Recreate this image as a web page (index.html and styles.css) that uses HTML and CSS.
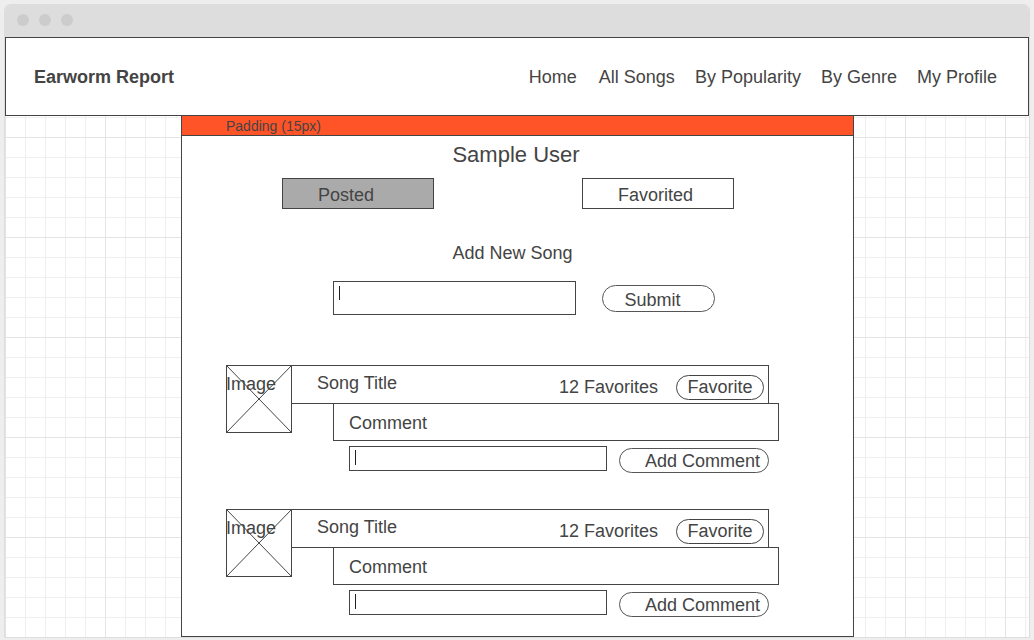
FILE: index.html
```html
<!DOCTYPE html>
<html>
<head>
<meta charset="utf-8">
<title>Earworm Report</title>
<link rel="stylesheet" href="styles.css">
</head>
<body>
<div class="window">
  <div class="titlebar">
    <span class="dot"></span><span class="dot"></span><span class="dot"></span>
  </div>
  <div class="canvas">
    <header class="header">
      <div class="brand">Earworm Report</div>
      <nav class="nav">
        <a class="nav-home">Home</a>
        <a>All Songs</a>
        <a>By Popularity</a>
        <a>By Genre</a>
        <a>My Profile</a>
      </nav>
    </header>
    <main class="panel">
      <div class="padbar">Padding (15px)</div>
      <h1 class="username">Sample User</h1>
      <div class="tabs">
        <div class="tab tab-active">Posted</div>
        <div class="tab tab-fav">Favorited</div>
      </div>
      <div class="add-title">Add New Song</div>
      <div class="add-row">
        <div class="field field-big"><span class="caret caret-big"></span></div>
        <div class="pill pill-submit">Submit</div>
      </div>

      <div class="card card-first">
        <div class="thumb">
          <svg class="thumb-x" width="66" height="68" viewBox="0 0 66 68"><line x1="0" y1="0" x2="66" y2="68" stroke="#444" stroke-width="1"/><line x1="66" y1="0" x2="0" y2="68" stroke="#444" stroke-width="1"/></svg>
          <span class="thumb-label">Image</span>
        </div>
        <div class="song">
          <div class="song-title">
            <span class="title-text">Song Title</span>
            <div class="fav-group">
              <span class="fav-count">12 Favorites</span>
              <div class="pill pill-fav">Favorite</div>
            </div>
          </div>
          <div class="comment">Comment</div>
          <div class="comment-row">
            <div class="field field-small"><span class="caret caret-small"></span></div>
            <div class="pill pill-add">Add Comment</div>
          </div>
        </div>
      </div>

      <div class="card card-next">
        <div class="thumb">
          <svg class="thumb-x" width="66" height="68" viewBox="0 0 66 68"><line x1="0" y1="0" x2="66" y2="68" stroke="#444" stroke-width="1"/><line x1="66" y1="0" x2="0" y2="68" stroke="#444" stroke-width="1"/></svg>
          <span class="thumb-label">Image</span>
        </div>
        <div class="song">
          <div class="song-title">
            <span class="title-text">Song Title</span>
            <div class="fav-group">
              <span class="fav-count">12 Favorites</span>
              <div class="pill pill-fav">Favorite</div>
            </div>
          </div>
          <div class="comment">Comment</div>
          <div class="comment-row">
            <div class="field field-small"><span class="caret caret-small"></span></div>
            <div class="pill pill-add">Add Comment</div>
          </div>
        </div>
      </div>
    </main>
  </div>
</div>
</body>
</html>
```
FILE: styles.css
```css
* { box-sizing: border-box; }

body {
  margin: 0;
  background: #eeeeee;
  font-family: "Liberation Sans", Arial, sans-serif;
  color: #444;
}

.window {
  margin: 4px 0 0 4px;
  width: 1026px;
  height: 634px;
  border: 1px solid #dddddd;
  border-radius: 6px 6px 0 0;
  background: #fff;
  overflow: hidden;
}

.titlebar {
  height: 32px;
  background: #dddddd;
  display: flex;
  align-items: flex-start;
  gap: 10px;
  padding: 9px 0 0 12px;
}

.dot {
  width: 12px;
  height: 12px;
  border-radius: 50%;
  background: #cccccc;
}

.canvas {
  height: 600px;
  background-color: #fff;
  background-image:
    linear-gradient(to right, #e4e4e4 1px, transparent 1px),
    linear-gradient(to bottom, #e4e4e4 1px, transparent 1px),
    linear-gradient(to right, #efefef 1px, transparent 1px),
    linear-gradient(to bottom, #efefef 1px, transparent 1px);
  background-size: 100px 100px, 100px 100px, 20px 20px, 20px 20px;
}

.header {
  height: 79px;
  border: 1px solid #444;
  background: #fff;
  display: flex;
  align-items: center;
  justify-content: space-between;
  padding: 2px 31px 0 28px;
}

.brand {
  font-weight: bold;
  font-size: 18px;
}

.nav {
  display: flex;
  gap: 20px;
  font-size: 18px;
}

.nav-home { margin-right: 2px; }

.panel {
  margin: -1px 0 0 176px;
  width: 673px;
  height: 522px;
  border: 1px solid #444;
  background: #fff;
}

.padbar {
  height: 20px;
  background: #ff5328;
  border-bottom: 1px solid #444;
  font-size: 14px;
  line-height: 21px;
  padding-left: 44px;
  color: #444;
}

.username {
  margin: 5px 0 0;
  padding-top: 1px;
  font-size: 22px;
  font-weight: normal;
  line-height: 26px;
  text-align: center;
  padding-right: 3px;
}

.tabs {
  display: flex;
  gap: 148px;
  margin: 10px 0 0 100px;
}

.tab {
  width: 152px;
  height: 31px;
  border: 1px solid #444;
  font-size: 18px;
  padding-top: 2px;
  line-height: 29px;
  text-align: center;
  padding-right: 24px;
  background: #fff;
}

.tab-fav { padding-right: 5px; }

.tab-active { background: #aaaaaa; }

.add-title {
  margin-top: 33px;
  font-size: 18px;
  line-height: 22px;
  text-align: center;
  padding-right: 10px;
}

.add-row {
  display: flex;
  align-items: center;
  margin: 17px 0 0 151px;
}

.field {
  border: 1px solid #444;
  background: #fff;
  display: flex;
  align-items: flex-start;
}

.field-big { width: 243px; height: 34px; }
.field-small { width: 258px; height: 25px; }

.caret {
  width: 1px;
  background: #222;
}
.caret-big { height: 14px; margin: 4px 0 0 5px; }
.caret-small { height: 15px; margin: 3px 0 0 5px; }

.pill {
  border: 1px solid #555;
  border-radius: 14px;
  font-size: 18px;
  background: #fff;
}

.pill-submit {
  margin-left: 26px;
  width: 113px;
  height: 27px;
  line-height: 29px;
  text-align: center;
  padding-right: 12px;
}

.card {
  display: flex;
  margin-left: 44px;
}
.card-first { margin-top: 50px; }
.card-next { margin-top: 36px; }

.thumb {
  position: relative;
  width: 66px;
  height: 68px;
  border: 1px solid #444;
  flex: none;
  padding-top: 7px;
  font-size: 18px;
  line-height: 22px;
}

.thumb-x {
  position: absolute;
  left: -1px;
  top: -1px;
}

.thumb-label {
  position: relative;
  margin-left: -1px;
}

.song {
  margin-left: -1px;
  display: flex;
  flex-direction: column;
}

.song-title {
  width: 478px;
  height: 39px;
  border: 1px solid #444;
  display: flex;
  align-items: center;
  justify-content: space-between;
  padding: 0 4px 0 25px;
  font-size: 18px;
}

.title-text { margin-top: -2px; }

.fav-group {
  display: flex;
  align-items: center;
  gap: 18px;
  margin-top: 5px;
}

.pill-fav {
  width: 88px;
  height: 25px;
  line-height: 23px;
  text-align: center;
  border-color: #444;
}

.comment {
  margin: -1px 0 0 42px;
  width: 446px;
  height: 38px;
  border: 1px solid #444;
  display: flex;
  align-items: center;
  padding: 2px 0 0 15px;
  font-size: 18px;
}

.comment-row {
  display: flex;
  align-items: flex-start;
  margin: 5px 0 0 58px;
}

.pill-add {
  margin: 2px 0 0 12px;
  width: 150px;
  height: 25px;
  line-height: 25px;
  text-align: right;
  padding-right: 8px;
}
```
